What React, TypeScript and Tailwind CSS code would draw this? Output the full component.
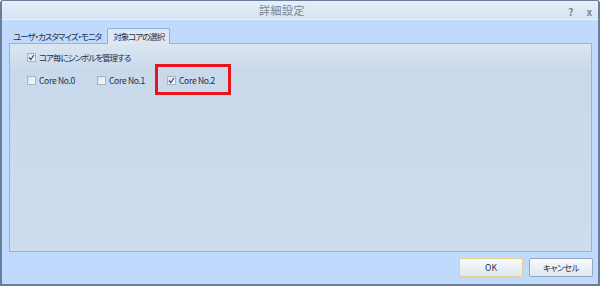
import React from "react";

const jp = {
  fontFamily: '"Noto Sans CJK JP", "Noto Sans", sans-serif',
  fontFeatureSettings: '"palt"',
};

function Check({ checked }: { checked?: boolean }) {
  return (
    <span className="relative flex h-[9px] w-[9px] shrink-0 items-center justify-center border border-[#a7b3c2] bg-gradient-to-br from-[#dfe4ea] to-[#f8f9fb]">
      {checked && (
        <svg width="7" height="7" viewBox="0 0 7 7" className="absolute">
          <path d="M1 3.5 L2.8 5.5 L6 1" fill="none" stroke="#2f4a78" strokeWidth="1.2" />
        </svg>
      )}
    </span>
  );
}

function Option({ label, checked, jpText }: { label: string; checked?: boolean; jpText?: boolean }) {
  return (
    <label className="flex h-[12px] items-center gap-[2px] text-[8.5px] leading-[12px] text-[#1e2f4a]">
      <Check checked={checked} />
      <span className={jpText ? "ml-[1px] tracking-[-1px]" : "ml-[1px] tracking-[-0.3px]"}>{label}</span>
    </label>
  );
}

export default function App() {
  return (
    <div
      className="flex h-[286px] w-[600px] flex-col overflow-hidden rounded-t-[3px] border-2 border-t border-[#6a7e9c] bg-[#bfdafd]"
      style={jp}
    >
      {/* title bar */}
      <div className="relative flex h-[19px] shrink-0 items-center justify-center border-b border-[#e9f1fb] bg-gradient-to-b from-[#e6eef8] to-[#d6e3f3] pr-[36px]">
        <span className="text-[11px] tracking-[0.5px] text-[#7a8596]">詳細設定</span>
        <div className="absolute right-[6px] top-[3px] flex gap-[13px] text-[10px] font-bold text-[#7d8796]">
          <span>?</span>
          <span>x</span>
        </div>
      </div>

      <div className="flex flex-1 flex-col px-[7px] pt-[8px]">
        {/* tabs */}
        <div className="flex h-[15px] items-end pl-[1px]">
          <div className="flex h-[14px] items-center px-[3px] text-[8.5px] tracking-[-1px] text-[#1e2f4a]">
            ユーザ・カスタマイズ・モニタ
          </div>
          <div className="relative z-10 -mb-px ml-[3px] flex h-[16px] items-center rounded-t-[2px] border border-b-0 border-[#8eaed6] bg-[#dfe8f2] px-[5px] text-[8.5px] tracking-[-1px] text-[#1e2f4a]">
            対象コアの選択
          </div>
        </div>

        {/* panel */}
        <div className="relative h-[209px] w-[583px] border border-[#93b4da] bg-gradient-to-b from-[#dce6f1] from-[0%] via-[#c9d9ec] via-[12%] to-[#cddcee] pl-[17px] pt-[7px]">
          <Option label="コア毎にシンボルを管理する" checked jpText />
          <div className="mt-[11px] flex">
            <div className="w-[70px]">
              <Option label="Core No.0" />
            </div>
            <div className="w-[70px]">
              <Option label="Core No.1" />
            </div>
            <Option label="Core No.2" checked />
          </div>
          <div className="absolute left-[145px] top-[20px] h-[31px] w-[76px] border-[3px] border-[#e8131d]" />
        </div>

        {/* footer */}
        <div className="-mr-[2px] flex justify-end gap-[6px] pt-[6px]">
          <button className="flex h-[19px] w-[64px] items-center justify-center rounded-[2px] border border-[#e3d08e] bg-gradient-to-b from-[#f8fafc] to-[#dfe7f1] text-[8.5px] text-[#1e2f4a]">
            OK
          </button>
          <button className="flex h-[19px] w-[64px] items-center justify-center rounded-[2px] border border-[#98a8bd] bg-gradient-to-b from-[#f8fafc] to-[#dfe7f1] text-[8.5px] tracking-[-0.5px] text-[#1e2f4a]">
            キャンセル
          </button>
        </div>
      </div>
    </div>
  );
}
